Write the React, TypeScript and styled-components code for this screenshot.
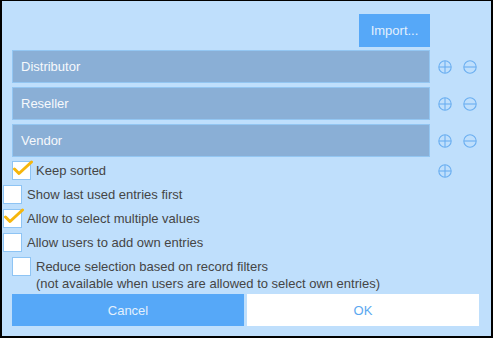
import styled, { createGlobalStyle } from 'styled-components'

const GlobalStyle = createGlobalStyle`
  html, body {
    margin: 0;
    padding: 0;
    background: #ffffff;
  }
  * {
    box-sizing: border-box;
  }
`

const fields = ['Distributor', 'Reseller', 'Vendor']

const options = [
  { label: 'Show last used entries first', checked: false },
  { label: 'Allow to select multiple values', checked: true },
  { label: 'Allow users to add own entries', checked: false },
]

const CircleIcon = ({ plus }: { plus?: boolean }) => (
  <svg width="14" height="14" viewBox="0 0 14 14">
    <circle cx="7" cy="7" r="6.2" fill="none" stroke="#6aaef0" strokeWidth="1.1" />
    <line x1="1" y1="7" x2="13" y2="7" stroke="#6aaef0" strokeWidth="1.1" />
    {plus && <line x1="7" y1="1" x2="7" y2="13" stroke="#6aaef0" strokeWidth="1.1" />}
  </svg>
)

const Check = ({ checked }: { checked: boolean }) => (
  <Box>
    {checked && (
      <svg width="22" height="20" viewBox="0 0 22 20">
        <polyline
          points="2.5,9 7,13.5 19.5,2"
          fill="none"
          stroke="#f6b60c"
          strokeWidth="3"
          strokeLinecap="round"
          strokeLinejoin="round"
        />
      </svg>
    )}
  </Box>
)

const App = () => (
  <>
    <GlobalStyle />
    <Frame>
      <Toolbar>
        <ImportButton>Import...</ImportButton>
      </Toolbar>
      <List>
        {fields.map((f) => (
          <Row key={f}>
            <Field>{f}</Field>
            <Actions>
              <CircleIcon plus />
              <CircleIcon />
            </Actions>
          </Row>
        ))}
        <Row>
          <Option $indent>
            <Check checked />
            <span>Keep sorted</span>
          </Option>
          <Actions>
            <CircleIcon plus />
          </Actions>
        </Row>
      </List>
      <Options>
        {options.map((o) => (
          <Option key={o.label}>
            <Check checked={o.checked} />
            <span>{o.label}</span>
          </Option>
        ))}
        <Option $indent $top>
          <Check checked={false} />
          <span>
            Reduce selection based on record filters
            <br />
            (not available when users are allowed to select own entries)
          </span>
        </Option>
      </Options>
      <Footer>
        <FooterButton>Cancel</FooterButton>
        <FooterButton $light>OK</FooterButton>
      </Footer>
    </Frame>
  </>
)

export default App

const Frame = styled.div`
  width: 493px;
  height: 338px;
  background: #bfdffc;
  border: 2px solid #000;
  border-top-width: 1px;
  padding: 13px 12px 0 1px;
  font-family: 'Liberation Sans', Arial, sans-serif;
  font-size: 13px;
  color: #454545;
  display: flex;
  flex-direction: column;
`

const Toolbar = styled.div`
  display: flex;
  justify-content: flex-end;
  padding-right: 49px;
  margin-bottom: 3px;
`

const ImportButton = styled.button`
  width: 71px;
  height: 33px;
  border: none;
  background: #56a8f8;
  color: #e3f0fd;
  font: inherit;
  padding: 0;
`

const List = styled.div`
  display: flex;
  flex-direction: column;
  gap: 4px;
`

const Row = styled.div`
  display: grid;
  grid-template-columns: 1fr 49px;
  align-items: center;
`

const Field = styled.div`
  margin-left: 9px;
  height: 33px;
  background: #8aafd6;
  border: 1px solid #93c6f2;
  color: #f7f9fc;
  display: flex;
  align-items: center;
  padding-left: 8px;
`

const Actions = styled.div`
  display: flex;
  gap: 11px;
  padding-left: 8px;
  align-items: center;
  svg {
    display: block;
  }
`

const Options = styled.div`
  display: flex;
  flex-direction: column;
  gap: 5px;
  margin-top: 5px;
`

const Option = styled.div<{ $indent?: boolean; $top?: boolean }>`
  display: flex;
  align-items: ${(p) => (p.$top ? 'flex-start' : 'center')};
  gap: 5px;
  margin-left: ${(p) => (p.$indent ? '9px' : '0')};
  min-height: 18px;
  line-height: 17px;
  span {
    padding-top: ${(p) => (p.$top ? '1px' : '0')};
  }
`

const Box = styled.div`
  position: relative;
  width: 19px;
  height: 19px;
  flex: none;
  background: #ffffff;
  border: 1px solid #8ec4f4;
  svg {
    position: absolute;
    left: -1px;
    top: -2px;
  }
`

const Footer = styled.div`
  display: flex;
  gap: 3px;
  margin-left: 9px;
  margin-top: 2px;
`

const FooterButton = styled.button<{ $light?: boolean }>`
  flex: 1;
  height: 32px;
  border: none;
  padding: 0;
  font: inherit;
  background: ${(p) => (p.$light ? '#ffffff' : '#56a8f8')};
  color: ${(p) => (p.$light ? '#5ba8f0' : '#e3f0fd')};
`
